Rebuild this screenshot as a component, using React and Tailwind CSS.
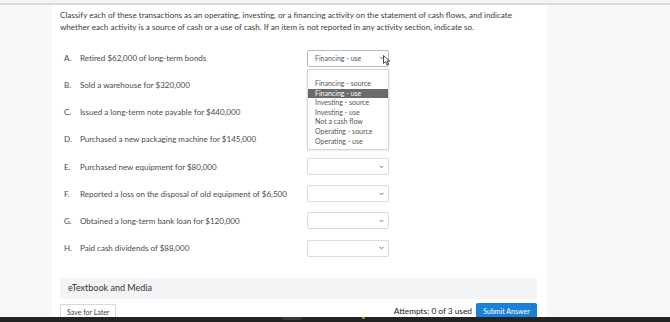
const rows = [
  { key: "A.", text: "Retired $62,000 of long-term bonds", value: "Financing - use", open: true },
  { key: "B.", text: "Sold a warehouse for $320,000", value: "" },
  { key: "C.", text: "Issued a long-term note payable for $440,000", value: "" },
  { key: "D.", text: "Purchased a new packaging machine for $145,000", value: "" },
  { key: "E.", text: "Purchased new equipment for $80,000", value: "", box: true },
  { key: "F.", text: "Reported a loss on the disposal of old equipment of $6,500", value: "", box: true },
  { key: "G.", text: "Obtained a long-term bank loan for $120,000", value: "", box: true },
  { key: "H.", text: "Paid cash dividends of $88,000", value: "", box: true },
];

const options = [
  "Financing - source",
  "Financing - use",
  "Investing - source",
  "Investing - use",
  "Not a cash flow",
  "Operating - source",
  "Operating - use",
];

function Chevron() {
  return (
    <svg width="5" height="4" viewBox="0 0 5 4" className="text-[#666]">
      <path d="M0.6 0.8 L2.5 2.8 L4.4 0.8" fill="none" stroke="currentColor" strokeWidth="0.9" />
    </svg>
  );
}

function Cursor() {
  return (
    <svg width="8" height="11" viewBox="0 0 8 11" className="absolute left-[76px] top-[5px]">
      <path d="M0.5 0.5 L0.5 8.5 L2.5 6.6 L4 10 L5.4 9.4 L3.9 6.1 L6.6 6.1 Z" fill="#fff" stroke="#222" strokeWidth="0.8" strokeLinejoin="round" />
    </svg>
  );
}

function SelectBox({ row }) {
  if (row.open) {
    return (
      <div className="relative">
        <div className="flex h-[17px] w-[82px] items-center justify-between rounded-[2px] border border-[#a8bfd2] bg-white pl-[7px] pr-[4px] text-[7px] text-[#555]">
          <span>{row.value}</span>
          <Chevron />
        </div>
        <Cursor />
        <div className="absolute left-0 top-[19px] z-10 w-[82px] border border-[#d5d5d5] bg-white pb-[3px] pt-[9.5px] shadow-[0_1px_2px_rgba(0,0,0,0.08)]">
          {options.map((o) => (
            <div
              key={o}
              className={
                o === row.value
                  ? "h-[9.6px] bg-[#6b6b6b] pl-[7px] text-[7px] leading-[9.6px] text-white"
                  : "h-[9.6px] pl-[7px] text-[7px] leading-[9.6px] text-[#555]"
              }
            >
              {o}
            </div>
          ))}
        </div>
      </div>
    );
  }
  if (!row.box) return <div className="h-[17px] w-[82px]" />;
  return (
    <div className="flex h-[17px] w-[82px] items-center justify-end rounded-[2px] border border-[#dcdcdc] bg-white pr-[4px]">
      <Chevron />
    </div>
  );
}

export default function App() {
  return (
    <div className="relative h-[322px] w-[670px] overflow-hidden bg-[#f8f8f8] font-['Lato',sans-serif]">
      <div className="h-[3px] bg-[#f4f4f4]" />
      <div className="h-[2px] bg-[#dadada]" />
      <div className="ml-[52px] h-[317px] w-[495px] bg-white pl-[8px] pr-[10px]">
        <p className="pt-[4px] text-[8.1px] leading-[12px] text-[#3c3c3c]">
          Classify each of these transactions as an operating, investing, or a financing activity on the statement of cash flows, and indicate
          <br />
          whether each activity is a source of cash or a use of cash. If an item is not reported in any activity section, indicate so.
        </p>
        <div className="mt-[11.5px] flex flex-col">
          {rows.map((r) => (
            <div key={r.key} className="flex h-[27.15px] items-center">
              <span className="w-[20px] pl-[4px] text-[8px] text-[#4a4a4a]">{r.key}</span>
              <span className="w-[227px] text-[8px] text-[#4a4a4a]">{r.text}</span>
              <SelectBox row={r} />
            </div>
          ))}
        </div>
        <div className="mt-[16px] flex h-[21px] items-center rounded-[2px] bg-[#f3f4f5] pl-[8px] text-[9px] text-[#333]">
          eTextbook and Media
        </div>
        <div className="mt-[4px] flex items-start justify-between">
          <div className="mt-[1px] flex h-[18px] items-center border border-[#d8d8d8] px-[6px] text-[7px] text-[#444]">
            Save for Later
          </div>
          <div className="flex items-center gap-[4px]">
            <span className="text-[8.3px] text-[#222]">Attempts: 0 of 3 used</span>
            <div className="flex h-[18px] w-[61px] items-center justify-center rounded-t-[2px] bg-[#1a82d6] text-[7px] text-white">
              Submit Answer
            </div>
          </div>
        </div>
      </div>
      <div className="absolute bottom-0 left-0 flex h-[5px] w-full items-start bg-[#232323]">
        <div className="ml-[282px] h-[3px] w-[20px] rounded-b-[2px] bg-[#3a3a3a]" />
        <div className="ml-[60px] h-[2px] w-[3px] rounded-full bg-[#d08a20]" />
      </div>
    </div>
  );
}
